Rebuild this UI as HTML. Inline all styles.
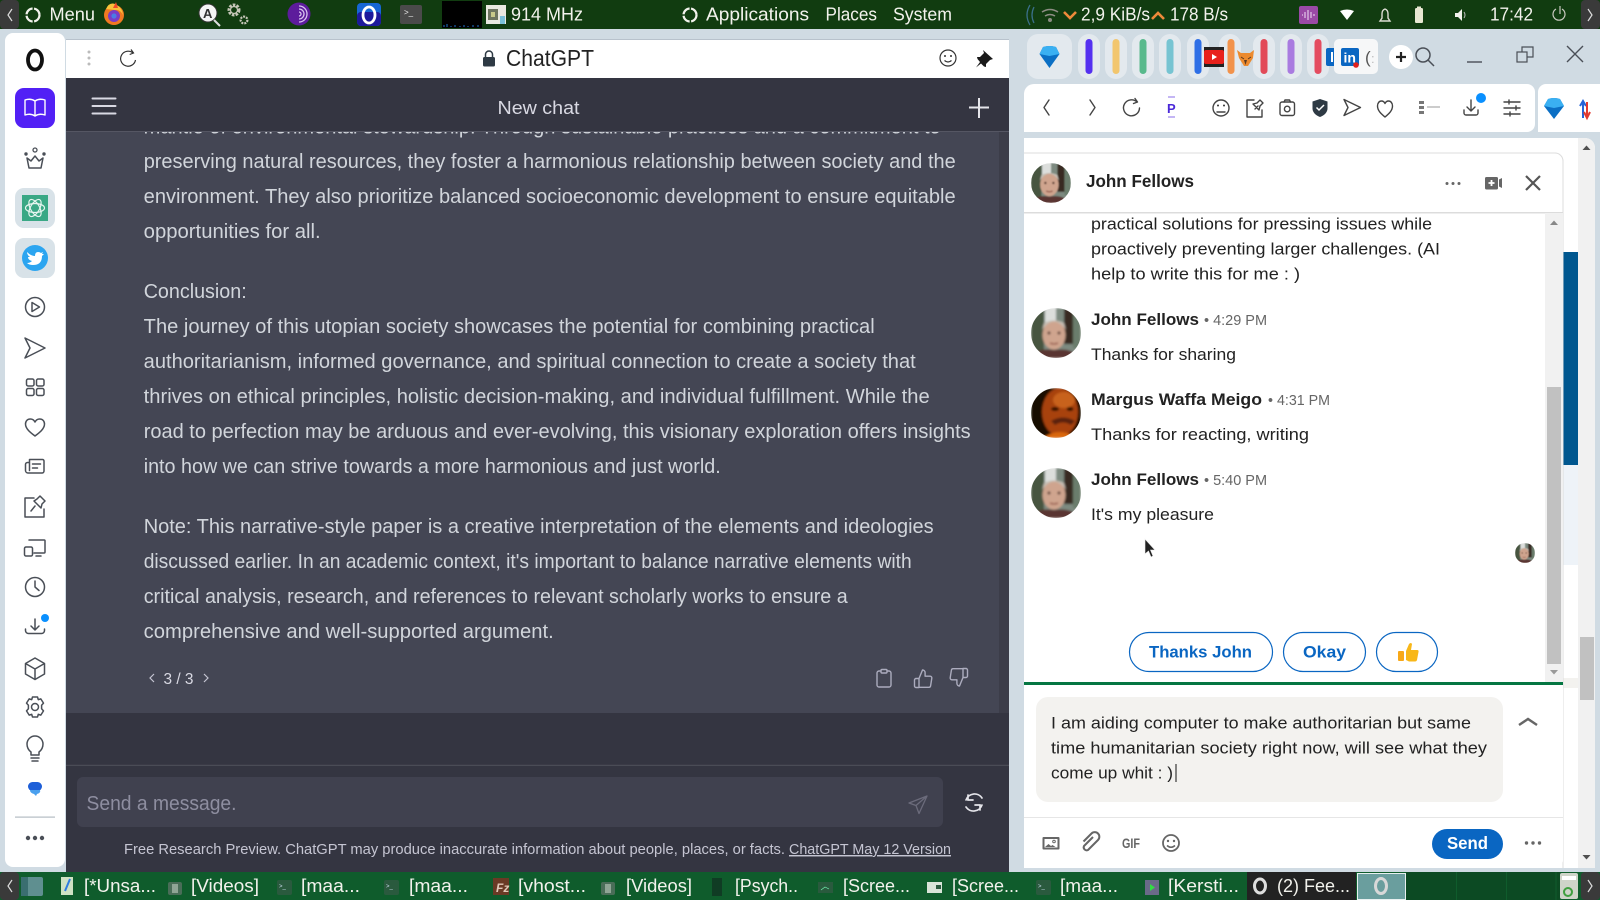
<!DOCTYPE html>
<html><head><meta charset="utf-8"><title>ChatGPT</title>
<style>
html,body{margin:0;padding:0;width:1600px;height:900px;overflow:hidden;background:#d0dbe3}
svg{display:block}
text{font-family:"Liberation Sans",sans-serif;white-space:pre}
.b{font-size:20px;fill:#d1d5db}
.top{font-size:18px;fill:#f2f2ec}
.task{font-size:18px;fill:#f2f2ec}
.li{font-size:17px;fill:#222}
.nm{font-size:17px;font-weight:bold;fill:#222}
.tm{font-size:15px;fill:#666}
.pill{font-size:17px;font-weight:bold;fill:#0a66c2}
.ic{fill:none;stroke:#4a4f57;stroke-width:1.5;stroke-linecap:round;stroke-linejoin:round}
.tb{fill:none;stroke:#444;stroke-width:1.4;stroke-linecap:round;stroke-linejoin:round}
</style></head><body>
<svg width="1600" height="900" viewBox="0 0 1600 900" xmlns="http://www.w3.org/2000/svg">
<defs>
<filter id="bl" x="-10%" y="-10%" width="120%" height="120%"><feGaussianBlur stdDeviation="1.100"/></filter>
<clipPath id="cj"><circle cx="25" cy="25" r="25"/></clipPath>
<g id="john"><g clip-path="url(#cj)"><g filter="url(#bl)"><rect width="50" height="50" fill="#7d8a80"/><rect x="0" width="13" height="50" fill="#46543f"/><rect x="14" width="11" height="26" fill="#dcdedc"/><rect x="33" width="9" height="36" fill="#382a24"/><rect x="42" width="8" height="40" fill="#6a7d6c"/><ellipse cx="23" cy="27" rx="11.500" ry="14.500" fill="#cfa48e"/><path d="M11 22Q23 5 35 22L33 15Q23 10 13 15Z" fill="#c5beb4"/><circle cx="18" cy="25" r="1.500" fill="#5a3a30"/><circle cx="28" cy="25" r="1.500" fill="#5a3a30"/><path d="M19 35q4 2 8 0" stroke="#9a5f50" stroke-width="1.600" fill="none"/><path d="M0 50Q6 39 23 42Q40 39 50 50Z" fill="#5a3530"/></g></g></g>
<clipPath id="cm"><circle cx="25" cy="25" r="25"/></clipPath>
<g id="marg"><g clip-path="url(#cm)"><g filter="url(#bl)"><rect width="50" height="50" fill="#1d0d06"/><ellipse cx="29" cy="24" rx="18" ry="24" fill="#a8420f"/><ellipse cx="33" cy="12" rx="11" ry="8" fill="#c8621a"/><ellipse cx="24" cy="21" rx="4" ry="2" fill="#2e1004"/><ellipse cx="39" cy="21" rx="3.500" ry="2" fill="#2e1004"/><path d="M20 33Q32 26 44 33L40 37Q32 32 24 37Z" fill="#5a2208"/><path d="M12 50Q28 38 46 50Z" fill="#d9660f"/><rect x="0" width="9" height="50" fill="#140805"/></g></g></g>
</defs>

<rect width="1600" height="900" fill="#d0dbe3"/>

<!-- top panel -->
<rect width="1600" height="29" fill="#113c10"/>
<rect x="0" y="0" width="19" height="29" rx="4" fill="#3a3a3a"/>
<path d="M12 9l-4 6 4 6" fill="none" stroke="#ddd" stroke-width="1.200"/>
<g fill="none" stroke="#f2f2ec" stroke-width="2.200"><circle cx="33" cy="15" r="6.500" stroke-dasharray="9 1.500"/></g>
<text class="top" x="49.500" y="20.500" textLength="45.500" lengthAdjust="spacingAndGlyphs">Menu</text>
<circle cx="114" cy="15" r="10" fill="#f07a22"/><path d="M106 9q3-7 9-5 7 3 8 11-3-6-8-5z" fill="#f9c33a"/><path d="M116 2l2 6-5 0z" fill="#f14a2a"/><circle cx="114" cy="16" r="6" fill="#7a3cc4"/><circle cx="114" cy="16" r="2.600" fill="#4a7be4"/>
<circle cx="208" cy="13" r="9" fill="#f5f5f5" stroke="#333" stroke-width="1"/><text x="203" y="18" font-size="13" font-weight="bold" fill="#333">A</text><path d="M214 20l6 6" stroke="#ddd" stroke-width="2"/>
<g fill="none" stroke="#c6c6b8"><circle cx="234" cy="10" r="5" stroke-width="3" stroke-dasharray="2.500 1.200"/><circle cx="234" cy="10" r="3.500" stroke-width="1.200"/><circle cx="244" cy="20" r="3.400" stroke-width="2.200" stroke-dasharray="2 1"/></g>
<circle cx="299" cy="14" r="11.500" fill="#5d1c9c"/><path d="M299 6a8 8 0 010 16M299 9a5 5 0 010 10M299 12a2 2 0 010 4" fill="none" stroke="#d9c4ef" stroke-width="1.300"/>
<rect x="357" y="3" width="24" height="23" rx="4" fill="#1666d4"/><rect x="357" y="12" width="24" height="14" rx="4" fill="#1d1a9c"/><ellipse cx="369" cy="15" rx="6" ry="8" fill="none" stroke="#fff" stroke-width="2.800"/>
<rect x="400" y="5" width="22" height="19" rx="2" fill="#4a4a4a"/><text x="404" y="15" font-size="8" fill="#eee">&gt;_</text>
<rect x="442" y="1" width="40" height="27" fill="#000"/><path d="M444 27v-2M447 27v-3M451 27v-1M455 27v-2M460 27v-1M464 27v-2M468 27v-1M473 27v-2M478 27v-2" stroke="#1e74c8" stroke-width="1"/>
<rect x="486" y="5" width="20" height="19" fill="#e9e9e0"/><rect x="488" y="9" width="10" height="11" fill="#6d7560"/><rect x="500" y="16" width="5" height="8" fill="#7ac0d8"/><rect x="491" y="12" width="4" height="5" fill="#c7c98a"/>
<text class="top" x="511" y="20.500" textLength="72" lengthAdjust="spacingAndGlyphs">914 MHz</text>
<circle cx="690" cy="15" r="6.500" fill="none" stroke="#f2f2ec" stroke-width="2.200" stroke-dasharray="9 1.500"/>
<text class="top" x="706" y="20.500" textLength="103" lengthAdjust="spacingAndGlyphs">Applications</text>
<text class="top" x="825.500" y="20.500" textLength="51.500" lengthAdjust="spacingAndGlyphs">Places</text>
<text class="top" x="893" y="20.500" textLength="59" lengthAdjust="spacingAndGlyphs">System</text>
<path d="M1030 5q-6 10 0 20M1034 7q-4 8 0 16" fill="none" stroke="#3a6f88" stroke-width="1.300"/>
<path d="M1042 12q8-5 16 0M1045 16q5-3 10 0" fill="none" stroke="#8d8d84" stroke-width="1.600"/><circle cx="1050" cy="20" r="2" fill="#8d8d84"/>
<path d="M1064 12l6 6 6-6" fill="none" stroke="#ee8a3a" stroke-width="2.600"/>
<text class="top" x="1081" y="20.500" textLength="69" lengthAdjust="spacingAndGlyphs">2,9 KiB/s</text>
<path d="M1152 19l6-6 6 6" fill="none" stroke="#ee8a3a" stroke-width="2.600"/>
<text class="top" x="1170" y="20.500" textLength="58" lengthAdjust="spacingAndGlyphs">178 B/s</text>
<rect x="1299" y="6" width="19" height="18" rx="2" fill="#9a4aa6"/><path d="M1302 15h1M1305 12v6M1308 10v10M1311 12v6M1314 14v2" stroke="#e3c8e8" stroke-width="1.200"/>
<path d="M1340 11q7-3 14 0l-7 9z" fill="#fff"/>
<path d="M1380 21h10l-2-3v-4q0-4-3-5-3 1-3 5v4z" fill="none" stroke="#dcdcd2" stroke-width="1.400"/>
<rect x="1415" y="8" width="8" height="15" rx="1.400" fill="#e7e7d2"/><rect x="1417" y="6.500" width="4" height="2" fill="#e7e7d2"/>
<path d="M1455 13h3l4-4v12l-4-4h-3z" fill="#f2f2ec"/><path d="M1464 12q2 3 0 6" stroke="#bbb" fill="none"/>
<text class="top" x="1490" y="20.500" textLength="43" lengthAdjust="spacingAndGlyphs">17:42</text>
<path d="M1556 9a6 6 0 106 0M1560 6v8" fill="none" stroke="#c9c9c0" stroke-width="1.200"/>
<rect x="1581" y="0" width="19" height="29" rx="4" fill="#3a3a3a"/><path d="M1588 9l4 6-4 6" fill="none" stroke="#ddd" stroke-width="1.200"/>

<!-- left sidebar -->
<rect x="5" y="33" width="60" height="834" rx="8" fill="#fff"/>
<ellipse cx="35" cy="60" rx="7" ry="9.500" fill="none" stroke="#111" stroke-width="3.800"/>
<rect x="15" y="88" width="40" height="40" rx="9" fill="#5220f5"/>
<path d="M35 101c-3-2-7-2-10-1v15c3-1 7-1 10 1 3-2 7-2 10-1v-15c-3-1-7-1-10 1zM35 101v15" fill="none" stroke="#fff" stroke-width="1.400" stroke-linejoin="round"/>
<g class="ic"><path d="M27 158l4 3 4-5 4 5 4-3-2 10h-12z"/></g><circle cx="35" cy="150" r="2" fill="none" stroke="#4a4f57" stroke-width="1.300"/><circle cx="26" cy="154" r="1.700" fill="#4a4f57"/><circle cx="44" cy="154" r="1.700" fill="#4a4f57"/>
<rect x="15" y="188" width="40" height="40" rx="9" fill="#d8e2e8"/><rect x="22" y="195" width="26" height="26" fill="#3aa885"/>
<g fill="none" stroke="#e6f5ef" stroke-width="1.200"><ellipse cx="35" cy="208" rx="9.500" ry="4.500"/><ellipse cx="35" cy="208" rx="9.500" ry="4.500" transform="rotate(60 35 208)"/><ellipse cx="35" cy="208" rx="9.500" ry="4.500" transform="rotate(120 35 208)"/></g>
<rect x="15" y="238" width="40" height="40" rx="9" fill="#d8e2e8"/><circle cx="35" cy="258" r="13" fill="#2ca5f0"/>
<path d="M27 252q4 4 8 4 0-4 3-4 2 0 3 1l2-1-1 2 2 0-2 2q0 9-9 9-4 0-6-2 3 0 5-2-4-1-4-4h2q-3-2-3-5z" fill="#fff"/>
<g class="ic"><circle cx="35" cy="307" r="9.500"/><path d="M32 302.500l7.500 4.500-7.500 4.500z"/>
<path d="M25 338l20 10-20 10 5-10z"/>
<rect x="26.500" y="379" width="7.500" height="7" rx="1.600"/><rect x="36.500" y="379" width="7.500" height="7" rx="1.600"/><rect x="26.500" y="388.500" width="7.500" height="7" rx="1.600"/><rect x="36.500" y="388.500" width="7.500" height="7" rx="1.600"/>
<path d="M35 436c-4-3-9.500-7-9.500-12 0-3 2-5 4.800-5 2 0 3.700 1 4.700 3 1-2 2.700-3 4.700-3 2.800 0 4.800 2 4.800 5 0 5-5.500 9-9.500 12z"/>
<path d="M29.500 459.500h13a1.500 1.500 0 011.500 1.500v10a2 2 0 01-2 2H28a2.500 2.500 0 01-2.500-2.500v-6A2 2 0 0127.500 462.500H29.500zM29.500 462.500v8M32.500 464h8M32.500 468h5"/>
<path d="M34 498h-9v19h19v-8M31 511l4-5M34 501l7 7 1-4 3-3-5-5-3 3z"/>
<path d="M29 540h15a.8.8 0 011 1v11a1 1 0 01-1 1h-10M36 556h5M26 547h5a1.500 1.500 0 011.500 1.500v6a1.500 1.500 0 01-1.500 1.500h-5a1.500 1.500 0 01-1.500-1.500v-6A1.500 1.500 0 0126 547z"/>
<circle cx="35" cy="587" r="9.500"/><path d="M35 581v6l4 3.500"/>
<path d="M35 619v11M31 626l4 4 4-4M25.500 629v1.500a3 3 0 003 3h13a3 3 0 003-3V629"/>
<path d="M35 658l9.500 5.500v10.500l-9.500 5.500-9.500-5.500v-10.500zM25.500 663.500l9.500 5.500 9.500-5.500M35 669v10.500"/>
<circle cx="35" cy="707" r="3.500"/><path d="M32.500 697h5l.8 2.700 2.500-.8 2.700 4.200-1.900 2.100v3.600l1.900 2.100-2.700 4.200-2.500-.8-.8 2.700h-5l-.8-2.700-2.500.8-2.700-4.200 1.900-2.100v-3.600l-1.900-2.100 2.700-4.200 2.500.8z"/>
<path d="M31 752q-4-3-4-8a8 8 0 0116 0q0 5-4 8v3h-8zM31 758h8M32 761h6"/></g>
<circle cx="45" cy="618" r="4" fill="#0a90ff"/>
<rect x="28" y="782" width="14" height="9" rx="4.500" fill="#1e5fd8"/><path d="M30 790h10q1 3-3 4l-1 2-2-2q-4-1-4-4z" fill="#4aa0ee"/>
<rect x="15" y="816.500" width="40" height="1.200" fill="#b4bcc3"/>
<circle cx="28" cy="838" r="2.200" fill="#4a4f57"/><circle cx="35" cy="838" r="2.200" fill="#4a4f57"/><circle cx="42" cy="838" r="2.200" fill="#4a4f57"/>

<!-- main browser panel -->
<rect x="66" y="39" width="943" height="833" fill="#343541"/>
<rect x="66" y="39.500" width="943" height="38.500" fill="#fff"/><rect x="66" y="39" width="943" height="1" fill="#b8c2cc"/>
<circle cx="89" cy="52" r="1.500" fill="#bbb"/><circle cx="89" cy="58" r="1.500" fill="#bbb"/><circle cx="89" cy="64" r="1.500" fill="#bbb"/>
<path d="M133 53a7.500 7.500 0 10 2.500 7M131 49.500l2.500 3.500-3.800 1.500" fill="none" stroke="#333" stroke-width="1.200"/>
<rect x="483" y="57" width="12" height="9.500" rx="1.500" fill="#2e3a44"/><path d="M485.500 57v-2.500a3.500 3.500 0 017 0V57" fill="none" stroke="#2e3a44" stroke-width="1.500"/>
<text x="506" y="66" font-size="23" fill="#222" textLength="88" lengthAdjust="spacingAndGlyphs">ChatGPT</text>
<circle cx="948" cy="58" r="8" fill="none" stroke="#333" stroke-width="1.200"/><circle cx="945" cy="56" r="1" fill="#333"/><circle cx="951" cy="56" r="1" fill="#333"/><path d="M944.500 60.500q3.500 3 7 0" fill="none" stroke="#333" stroke-width="1.200"/>
<path d="M983 50l10 9-3 1-4 4 0 3-2-.5-3-3-5 4 4-5.500-2.500-3-.5-2 3 0 4-4z" fill="#1a1a1a"/>

<rect x="66" y="78" width="943" height="53" fill="#343541"/>
<rect x="66" y="131" width="933" height="582" fill="#444654"/>
<rect x="999" y="131" width="10" height="634" fill="#3c3d49"/>
<rect x="66" y="713" width="933" height="52" fill="#343541"/>
<rect x="999" y="713" width="10" height="52" fill="#343541"/>

<clipPath id="bodyclip"><rect x="66" y="131" width="933" height="582"/></clipPath>
<g clip-path="url(#bodyclip)">
<text class="b" x="143.700" y="133.500" textLength="797" lengthAdjust="spacingAndGlyphs">mantle of environmental stewardship. Through sustainable practices and a commitment to</text>
<text class="b" x="143.700" y="168" textLength="812" lengthAdjust="spacingAndGlyphs">preserving natural resources, they foster a harmonious relationship between society and the</text>
<text class="b" x="143.700" y="203" textLength="812" lengthAdjust="spacingAndGlyphs">environment. They also prioritize balanced socioeconomic development to ensure equitable</text>
<text class="b" x="143.700" y="238" textLength="177" lengthAdjust="spacingAndGlyphs">opportunities for all.</text>
<text class="b" x="143.700" y="298" textLength="103" lengthAdjust="spacingAndGlyphs">Conclusion:</text>
<text class="b" x="143.700" y="333" textLength="731" lengthAdjust="spacingAndGlyphs">The journey of this utopian society showcases the potential for combining practical</text>
<text class="b" x="143.700" y="368" textLength="772" lengthAdjust="spacingAndGlyphs">authoritarianism, informed governance, and spiritual connection to create a society that</text>
<text class="b" x="143.700" y="403" textLength="786" lengthAdjust="spacingAndGlyphs">thrives on ethical principles, holistic decision-making, and individual fulfillment. While the</text>
<text class="b" x="143.700" y="438" textLength="827" lengthAdjust="spacingAndGlyphs">road to perfection may be arduous and ever-evolving, this visionary exploration offers insights</text>
<text class="b" x="143.700" y="473" textLength="577" lengthAdjust="spacingAndGlyphs">into how we can strive towards a more harmonious and just world.</text>
<text class="b" x="143.700" y="533" textLength="790" lengthAdjust="spacingAndGlyphs">Note: This narrative-style paper is a creative interpretation of the elements and ideologies</text>
<text class="b" x="143.700" y="568" textLength="768" lengthAdjust="spacingAndGlyphs">discussed earlier. In an academic context, it's important to balance narrative elements with</text>
<text class="b" x="143.700" y="603" textLength="704" lengthAdjust="spacingAndGlyphs">critical analysis, research, and references to relevant scholarly works to ensure a</text>
<text class="b" x="143.700" y="638" textLength="410" lengthAdjust="spacingAndGlyphs">comprehensive and well-supported argument.</text>
</g>
<rect x="66" y="131" width="943" height="1" fill="#555663"/>
<g stroke="#d9d9e3" stroke-width="2" stroke-linecap="round"><path d="M92.500 98.500h23M92.500 106h23M92.500 113.500h23"/></g>
<text x="497.500" y="114" font-size="18" fill="#d9d9e3" textLength="82" lengthAdjust="spacingAndGlyphs">New chat</text>
<path d="M979 98v20M969 107.500h20" stroke="#e5e5ea" stroke-width="2"/>

<path d="M154 674l-4 4 4 4M204 674l4 4-4 4" fill="none" stroke="#c5c5d2" stroke-width="1.200"/>
<text x="163.500" y="684" font-size="15.500" fill="#d9d9e3" textLength="30" lengthAdjust="spacingAndGlyphs">3 / 3</text>
<g fill="none" stroke="#acacbe" stroke-width="1.400" stroke-linejoin="round" stroke-linecap="round">
<path d="M881 671h-2a2 2 0 00-2 2v12a2 2 0 002 2h10a2 2 0 002-2v-12a2 2 0 00-2-2h-2"/><rect x="881" y="669.500" width="6" height="3.500" rx="1"/>
<path d="M919 678.500l3.500-8.500a2.600 2.600 0 012.600 2.600v3.600h5a1.700 1.700 0 011.700 2l-1.200 7.600a1.700 1.700 0 01-1.700 1.500H919zM919 678.500h-3a1.500 1.500 0 00-1.500 1.500v6a1.500 1.500 0 001.500 1.500h3"/>
<path d="M963 677.500l-3.500 8.500a2.600 2.600 0 01-2.600-2.600v-3.600h-5a1.700 1.700 0 01-1.700-2l1.200-7.600a1.700 1.700 0 011.700-1.500H963zM963 677.500h3a1.500 1.500 0 001.500-1.500v-6a1.500 1.500 0 00-1.500-1.500h-3"/>
</g>

<rect x="66" y="764.800" width="943" height="1" fill="#50515c"/>
<rect x="77" y="777" width="866" height="50" rx="6" fill="#40414f"/>
<text x="86.500" y="810" font-size="20" fill="#8e8ea0" textLength="150" lengthAdjust="spacingAndGlyphs">Send a message.</text>
<path d="M927 796l-18 7 7 2.500 3 8zM927 796l-11 9.500" fill="none" stroke="#6b6b7b" stroke-width="1.300" stroke-linejoin="round"/>
<g fill="none" stroke="#e5e5ea" stroke-width="1.700" stroke-linecap="round"><path d="M966 800a9 9 0 0116-2M968 795v5h5M982 805a9 9 0 01-16 2M980 810v-5h-5"/></g>
<text x="124" y="854" font-size="14.500" fill="#c5c5d2" textLength="661" lengthAdjust="spacingAndGlyphs">Free Research Preview. ChatGPT may produce inaccurate information about people, places, or facts.</text>
<text x="789" y="854" font-size="14.500" fill="#c5c5d2" text-decoration="underline" textLength="162" lengthAdjust="spacingAndGlyphs">ChatGPT May 12 Version</text>

<!-- tabs -->
<rect x="1027" y="34" width="45" height="45" rx="11" fill="#e3e9ee"/>
<path d="M1043 47q6.500-2 13 0l3.500 7-10 14-10-14z" fill="#0b6fc4"/><path d="M1043 47q6.500-2 13 0l3.500 7-10 2-10-2z" fill="#3ab0f2"/>
<g fill="#e3e9ee"><rect x="1078" y="34" width="22" height="45" rx="11"/><rect x="1105" y="34" width="22" height="45" rx="11"/><rect x="1132" y="34" width="22" height="45" rx="11"/><rect x="1159" y="34" width="22" height="45" rx="11"/><rect x="1187" y="34" width="22" height="45" rx="11"/><rect x="1219" y="34" width="22" height="45" rx="11"/><rect x="1253" y="34" width="22" height="45" rx="11"/><rect x="1280" y="34" width="22" height="45" rx="11"/><rect x="1307" y="34" width="22" height="45" rx="11"/></g>
<rect x="1085.500" y="39" width="7" height="35" rx="3.500" fill="#5430f0"/><rect x="1112.500" y="39" width="7" height="35" rx="3.500" fill="#f2c66e"/><rect x="1139.500" y="39" width="7" height="35" rx="3.500" fill="#58b98c"/><rect x="1166.500" y="39" width="7" height="35" rx="3.500" fill="#77c4d2"/><rect x="1194.500" y="39" width="7" height="35" rx="3.500" fill="#2f6fe6"/><rect x="1227.500" y="39" width="7" height="35" rx="3.500" fill="#f2924b"/><rect x="1260.500" y="39" width="7" height="35" rx="3.500" fill="#e24a58"/><rect x="1287.500" y="39" width="7" height="35" rx="3.500" fill="#a97be0"/><rect x="1314.500" y="39" width="7" height="35" rx="3.500" fill="#e44c60"/>
<rect x="1204" y="47" width="20" height="20" fill="#222"/><rect x="1204" y="50" width="20" height="14" rx="2" fill="#e8211c"/><path d="M1212 54l5 3-5 3z" fill="#fff"/>
<path d="M1237 50l4 3h9l4-3-1 8-5 8h-4l-5-8z" fill="#ec8a2e"/><path d="M1244 60h3l-1.500 5z" fill="#5a3a22"/><path d="M1241 57l3 2M1251 57l-3 2" stroke="#5a3a22"/>
<rect x="1326" y="48" width="14" height="18" rx="2" fill="#0a66c2"/><rect x="1331" y="52" width="2" height="10" fill="#fff"/>
<rect x="1334" y="39" width="44" height="35" rx="5" fill="#f6f7f8"/><rect x="1341" y="48" width="18" height="18" rx="2" fill="#0a66c2"/>
<text x="1343.500" y="62.500" font-size="14" font-weight="bold" fill="#fff">in</text><circle cx="1356" cy="65" r="2.800" fill="#e0201c"/>
<text x="1365" y="63" font-size="17" fill="#555">(</text><text x="1371" y="63" font-size="13" fill="#bbb">:</text>
<circle cx="1401" cy="57" r="12" fill="#fff"/><path d="M1401 52v10M1396 57h10" stroke="#222" stroke-width="2.200"/>
<circle cx="1423" cy="55" r="7" fill="none" stroke="#4a4f57" stroke-width="1.500"/><path d="M1428 60l6 6" stroke="#4a4f57" stroke-width="1.500"/>
<path d="M1467 62h15" stroke="#4a4f57" stroke-width="1.400"/>
<path d="M1522 52v-5h11v10h-6" fill="none" stroke="#4a4f57" stroke-width="1.200"/><rect x="1517" y="52" width="10" height="10" fill="none" stroke="#4a4f57" stroke-width="1.200"/>
<path d="M1567 46l16 16M1583 46l-16 16" stroke="#4a4f57" stroke-width="1.400"/>

<!-- toolbar -->
<path d="M1034 84h493a8 8 0 018 8v32a8 8 0 01-8 8h-503v-38a10 10 0 0110-10z" fill="#fff"/>
<path d="M1546 84h54v48h-62v-40a8 8 0 018-8z" fill="#fff"/>
<g class="tb"><path d="M1049 100l-5 7.500 5 7.500M1090 100l5 7.500-5 7.500"/>
<path d="M1137 102a8 8 0 10 2.500 6M1135 98.500l2.500 3.500-4 1.500"/>
<circle cx="1221" cy="108" r="8"/><path d="M1217 112h8"/>
<path d="M1254 100h-7v17h15v-7M1255 109l3-3M1253 104l6 6 1-4 3-3-3-3-3 3z"/>
<rect x="1280" y="102" width="14.500" height="13.500" rx="2"/><circle cx="1287.200" cy="109" r="2.800"/><path d="M1284 102l1-2h4.500l1 2"/>
<path d="M1344 99.500l16.500 8-16.500 8 4-8z"/>
<path d="M1385 117c-3-2.500-7.500-6-7.500-11 0-3 1.800-5 4-5 1.600 0 2.800 1 3.500 2.500.7-1.500 1.900-2.500 3.500-2.500 2.200 0 4 2 4 5 0 5-4.500 8.500-7.500 11z"/>
<path d="M1471 100v11M1467 107l4 4 4-4M1464 110v3a2 2 0 002 2h10a2 2 0 002-2v-3"/>
<path d="M1504 102h16M1504 108h16M1504 114h16M1509 100v4M1516 106v4M1510 112v4"/></g>
<text x="1167" y="113" font-size="13" font-weight="bold" fill="#4a28d8">P</text><path d="M1168 97h7M1168 117h7" stroke="#8a6de8" stroke-width="1"/>
<circle cx="1218" cy="105.500" r="1" fill="#333"/><circle cx="1224" cy="105.500" r="1" fill="#333"/>
<path d="M1320 99l7.500 2.500v7c0 4-3.500 7-7.500 8.500-4-1.500-7.500-4.500-7.500-8.500v-7z" fill="#2e3a44"/><path d="M1316.500 107.500l2.500 2.500 5-5" fill="none" stroke="#fff" stroke-width="1.500"/>
<g fill="#777"><rect x="1419" y="101" width="5" height="3"/><rect x="1419" y="106" width="5" height="3"/><rect x="1419" y="111" width="5" height="3"/></g><path d="M1427 107h13" stroke="#bbb" stroke-width="1.500"/>
<circle cx="1481" cy="98" r="5" fill="#0a90ff"/>
<path d="M1548 99q6-2 12 0l4 7-10 13-10-13z" fill="#0b6fc4"/><path d="M1548 99q6-2 12 0l4 7-10 2-10-2z" fill="#3ab0f2"/>
<path d="M1583 118v-16M1580 106l3-5 3 5" fill="none" stroke="#2563d8" stroke-width="2"/><path d="M1587 102v15M1584 112l3 6 3-6" fill="none" stroke="#e23a30" stroke-width="2"/>

<!-- page area -->
<path d="M1024 138h561a10 10 0 0110 10v720h-571z" fill="#fff"/>
<rect x="1578" y="148" width="17" height="720" fill="#f1f1f1"/>
<path d="M1578 138h7a10 10 0 0110 10h-17z" fill="#f1f1f1"/>
<path d="M1582.500 150l4-4.500 4 4.500z" fill="#505050"/><path d="M1582.500 855l4 4.500 4-4.500z" fill="#505050"/>
<rect x="1580" y="637" width="14" height="63" fill="#c1c1c1"/>
<rect x="1563" y="252" width="15" height="213" fill="#00578f"/>
<rect x="1563" y="465" width="15" height="100" fill="#eef3f8"/>
<rect x="1563" y="678" width="15" height="10" fill="#f3f2ef"/>

<!-- chat widget -->
<rect x="1024" y="153" width="539.500" height="715" fill="#fff"/>
<path d="M1024 153h531a8 8 0 018 8v707" fill="none" stroke="#dcdcdc" stroke-width="1"/>
<rect x="1024" y="212" width="539" height="1.500" fill="#dcdcdc"/>
<g transform="translate(1031 163) scale(.8)"><use href="#john"/></g>
<text x="1086" y="187" font-size="17.500" font-weight="bold" fill="#222" textLength="108" lengthAdjust="spacingAndGlyphs">John Fellows</text>
<circle cx="1447" cy="183.500" r="1.500" fill="#666"/><circle cx="1453" cy="183.500" r="1.500" fill="#666"/><circle cx="1459" cy="183.500" r="1.500" fill="#666"/>
<rect x="1485" y="177" width="13" height="12.500" rx="1.500" fill="#666"/><path d="M1491.500 180v6M1488.500 183h6" stroke="#fff" stroke-width="1.800"/><path d="M1499 179.500l3-1.500v10l-3-1.500z" fill="#666"/>
<path d="M1526 176l14 14M1540 176l-14 14" stroke="#555" stroke-width="2.200"/>

<rect x="1545" y="213" width="18" height="469" fill="#f1f1f1"/>
<rect x="1547" y="387" width="14" height="277" fill="#c1c1c1"/>
<path d="M1550 225l4-4.500 4 4.500z" fill="#888"/><path d="M1550 670l4 4.500 4-4.500z" fill="#999"/>

<text class="li" x="1091" y="229.500" textLength="341" lengthAdjust="spacingAndGlyphs">practical solutions for pressing issues while</text>
<text class="li" x="1091" y="254.500" textLength="349" lengthAdjust="spacingAndGlyphs">proactively preventing larger challenges. (AI</text>
<text class="li" x="1091" y="279.500" textLength="209" lengthAdjust="spacingAndGlyphs">help to write this for me : )</text>

<g transform="translate(1031 308)"><use href="#john"/></g>
<text class="nm" x="1091" y="325" textLength="108" lengthAdjust="spacingAndGlyphs">John Fellows</text>
<text class="tm" x="1204" y="325" textLength="63" lengthAdjust="spacingAndGlyphs">• 4:29 PM</text>
<text class="li" x="1091" y="360" textLength="145" lengthAdjust="spacingAndGlyphs">Thanks for sharing</text>

<g transform="translate(1031 388)"><use href="#marg"/></g>
<text class="nm" x="1091" y="405" textLength="171" lengthAdjust="spacingAndGlyphs">Margus Waffa Meigo</text>
<text class="tm" x="1268" y="405" textLength="62" lengthAdjust="spacingAndGlyphs">• 4:31 PM</text>
<text class="li" x="1091" y="440" textLength="218" lengthAdjust="spacingAndGlyphs">Thanks for reacting, writing</text>

<g transform="translate(1031 468)"><use href="#john"/></g>
<text class="nm" x="1091" y="485" textLength="108" lengthAdjust="spacingAndGlyphs">John Fellows</text>
<text class="tm" x="1204" y="485" textLength="63" lengthAdjust="spacingAndGlyphs">• 5:40 PM</text>
<text class="li" x="1091" y="520" textLength="123" lengthAdjust="spacingAndGlyphs">It's my pleasure</text>
<g transform="translate(1515 543) scale(.4)"><use href="#john"/></g>
<path d="M1145 539v15l3.500-3 2.500 6 2-1-2.500-6h4.500z" fill="#222" stroke="#eee" stroke-width=".6"/>

<rect x="1129.500" y="632.500" width="143" height="39" rx="19.500" fill="#fff" stroke="#0a66c2" stroke-width="1.200"/>
<text class="pill" x="1149" y="657.500" textLength="103" lengthAdjust="spacingAndGlyphs">Thanks John</text>
<rect x="1283.500" y="632.500" width="82" height="39" rx="19.500" fill="#fff" stroke="#0a66c2" stroke-width="1.200"/>
<text class="pill" x="1303" y="657.500" textLength="43" lengthAdjust="spacingAndGlyphs">Okay</text>
<rect x="1376.500" y="632.500" width="61" height="39" rx="19.500" fill="#fff" stroke="#0a66c2" stroke-width="1.200"/>
<path d="M1406 651l3-7q2-2 3 0l-1 6h6q2 0 1.500 2l-1.500 8q-.5 1.500-2 1.500h-6l-3-1.500z" fill="#f8b718"/><rect x="1398" y="651" width="6" height="10" rx="1" fill="#f8a818"/>

<rect x="1024" y="682" width="539" height="3" fill="#057642"/>
<path d="M1024 685h539v175a8 8 0 01-8 8h-523a8 8 0 01-8-8z" fill="#fff"/>
<rect x="1036" y="697" width="467" height="105" rx="12" fill="#f3f2ef"/>
<text class="li" x="1051" y="728.500" textLength="420" lengthAdjust="spacingAndGlyphs">I am aiding computer to make authoritarian but same</text>
<text class="li" x="1051" y="753.500" textLength="436" lengthAdjust="spacingAndGlyphs">time humanitarian society right now, will see what they</text>
<text class="li" x="1051" y="778.500" textLength="122" lengthAdjust="spacingAndGlyphs">come up whit : )</text>
<rect x="1175.500" y="764" width="1" height="18" fill="#111"/>
<path d="M1519 725l9-6 9 6" fill="none" stroke="#666" stroke-width="2.400"/>
<rect x="1024" y="817" width="539" height="1" fill="#e6e6e6"/>
<rect x="1042.500" y="837" width="17" height="12.500" rx="1" fill="#666"/><rect x="1044.500" y="839" width="13" height="8.500" fill="#fff"/><path d="M1045 847l3.500-3 2.500 2 1.500-1 3 2z" fill="#666"/><circle cx="1054" cy="841.500" r="1.300" fill="none" stroke="#666"/>
<path d="M1096 839l-9 9a3 3 0 004 4l10-10a4.500 4.500 0 00-6.500-6.500l-8 8" fill="none" stroke="#666" stroke-width="2" transform="translate(-3 -2)"/>
<text x="1122" y="848" font-size="14" font-weight="bold" fill="#666" textLength="18" lengthAdjust="spacingAndGlyphs">GIF</text>
<circle cx="1171" cy="843" r="8" fill="none" stroke="#666" stroke-width="1.800"/><circle cx="1168" cy="841" r="1.200" fill="#666"/><circle cx="1174" cy="841" r="1.200" fill="#666"/><path d="M1167 845.500q4 3.500 8 0" fill="none" stroke="#666" stroke-width="1.500"/>
<rect x="1432" y="829" width="71" height="30" rx="15" fill="#0a66c2"/>
<text x="1447" y="849" font-size="17.500" font-weight="bold" fill="#fff" textLength="41" lengthAdjust="spacingAndGlyphs">Send</text>
<circle cx="1526.500" cy="843" r="1.700" fill="#666"/><circle cx="1533" cy="843" r="1.700" fill="#666"/><circle cx="1539.500" cy="843" r="1.700" fill="#666"/>

<!-- bottom panel -->
<rect y="872" width="1600" height="28" fill="#0f5c2c"/>
<rect x="0" y="872" width="19" height="28" rx="4" fill="#3a3a3a"/><path d="M12 880l-4 6 4 6" fill="none" stroke="#ddd" stroke-width="1.200"/>
<rect x="21" y="877" width="22" height="19" rx="2" fill="#5f8f90"/><rect x="21" y="877" width="7" height="19" fill="#3a6e70"/>
<rect x="61" y="877" width="12" height="18" fill="#cfe2c4"/><path d="M70 879l-5 12" stroke="#2f7de0" stroke-width="2"/>
<rect x="168" y="882" width="14" height="13" rx="2" fill="#4a6d58"/><rect x="172" y="884" width="6" height="9" fill="#8fa595"/>
<rect x="277" y="880" width="15" height="15" rx="2" fill="#2a5a3e"/><text x="279" y="888" font-size="6" fill="#cde">&gt;_</text>
<rect x="384" y="880" width="15" height="15" rx="2" fill="#2a5a3e"/><text x="386" y="888" font-size="6" fill="#cde">&gt;_</text>
<rect x="493" y="878" width="16" height="17" fill="#6a3a25"/><text x="496" y="892" font-size="12" font-style="italic" font-weight="bold" fill="#e0c8b8">Fz</text>
<rect x="601" y="882" width="14" height="13" rx="2" fill="#4a6d58"/><rect x="605" y="884" width="6" height="9" fill="#8fa595"/>
<rect x="712" y="878" width="10" height="18" fill="#103c24"/>
<rect x="818" y="882" width="15" height="11" fill="#2a5a3e"/><path d="M821 890l4-3 4 2" stroke="#7fb" stroke-width=".6" fill="none"/>
<rect x="927" y="882" width="15" height="11" fill="#d8e4d8"/><rect x="936" y="885" width="5" height="4" fill="#2a5a3e"/>
<rect x="1036" y="880" width="15" height="15" rx="2" fill="#2a5a3e"/><text x="1038" y="888" font-size="6" fill="#cde">&gt;_</text>
<rect x="1145" y="880" width="14" height="15" fill="#6a6a88"/><path d="M1150 884l5 3.500-5 3.500z" fill="#3d4"/>
<text class="task" x="84" y="892" textLength="72" lengthAdjust="spacingAndGlyphs">[*Unsa...</text>
<text class="task" x="191" y="892" textLength="68" lengthAdjust="spacingAndGlyphs">[Videos]</text>
<text class="task" x="301" y="892" textLength="59" lengthAdjust="spacingAndGlyphs">[maa...</text>
<text class="task" x="409" y="892" textLength="59" lengthAdjust="spacingAndGlyphs">[maa...</text>
<text class="task" x="518" y="892" textLength="68" lengthAdjust="spacingAndGlyphs">[vhost...</text>
<text class="task" x="626" y="892" textLength="66" lengthAdjust="spacingAndGlyphs">[Videos]</text>
<text class="task" x="735" y="892" textLength="63" lengthAdjust="spacingAndGlyphs">[Psych..</text>
<text class="task" x="843" y="892" textLength="67" lengthAdjust="spacingAndGlyphs">[Scree...</text>
<text class="task" x="952" y="892" textLength="67" lengthAdjust="spacingAndGlyphs">[Scree...</text>
<text class="task" x="1060" y="892" textLength="58" lengthAdjust="spacingAndGlyphs">[maa...</text>
<text class="task" x="1168" y="892" textLength="71" lengthAdjust="spacingAndGlyphs">[Kersti...</text>
<rect x="1247" y="872" width="109" height="28" fill="#222"/>
<ellipse cx="1260" cy="886" rx="5.500" ry="7" fill="none" stroke="#ddd" stroke-width="3"/>
<text class="task" x="1277" y="892" textLength="73" lengthAdjust="spacingAndGlyphs">(2) Fee...</text>
<rect x="1357.500" y="873.500" width="48" height="26" fill="#6a9e9e" stroke="#e8f0f0" stroke-width="1"/>
<ellipse cx="1381" cy="886" rx="5.500" ry="7.500" fill="none" stroke="#d8d8d8" stroke-width="3"/>
<rect x="1406" y="872" width="154" height="28" fill="#0c4a23"/><path d="M1456.500 872v28M1506.500 872v28M1556 872v28" stroke="#0f5c2c"/>
<rect x="1560" y="873" width="18" height="26" rx="2" fill="#cfd4c9"/><rect x="1562" y="876" width="14" height="4" fill="#fff"/><circle cx="1568" cy="892" r="4" fill="none" stroke="#3f9f3f" stroke-width="2"/>
<rect x="1581" y="872" width="19" height="28" rx="4" fill="#3a3a3a"/><path d="M1588 880l4 6-4 6" fill="none" stroke="#ddd" stroke-width="1.200"/>
</svg>
</body></html>
